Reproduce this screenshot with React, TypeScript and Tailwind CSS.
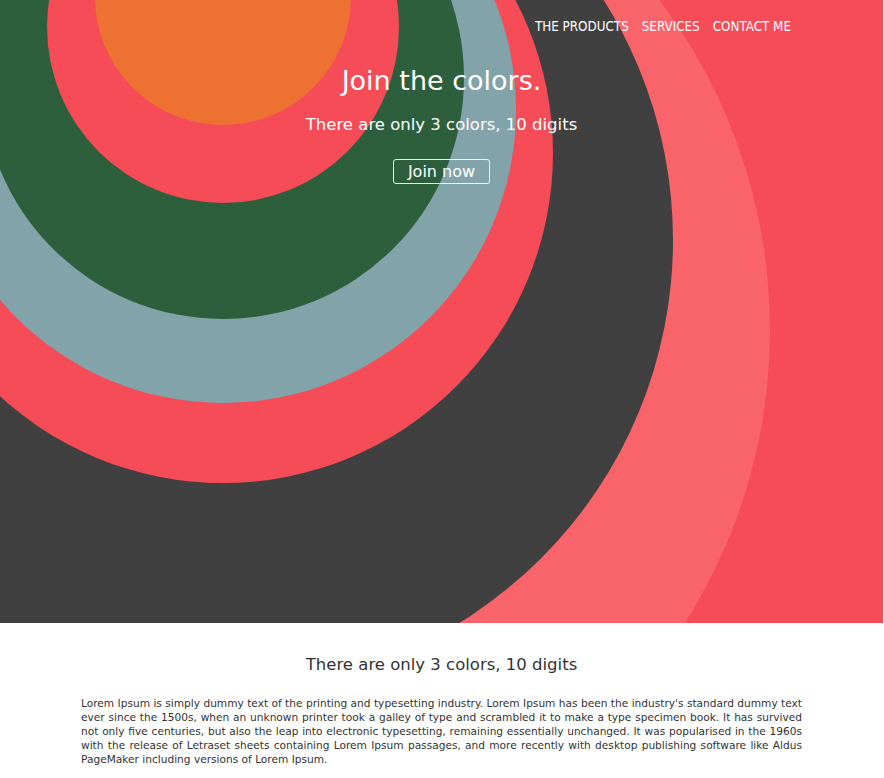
import React from "react";

const rings = [
  { cx: 223, cy: 330, r: 547, fill: "#F9646B" },
  { cx: 223, cy: 240, r: 450, fill: "#404040" },
  { cx: 223, cy: 153, r: 330, fill: "#F64C57" },
  { cx: 223, cy: 110, r: 293, fill: "#82A3AA" },
  { cx: 223, cy: 78, r: 241, fill: "#2E5F3D" },
  { cx: 223, cy: 27, r: 176, fill: "#F64C57" },
  { cx: 223, cy: -3, r: 128, fill: "#ED7231" },
];

function Backdrop() {
  return (
    <svg className="absolute inset-0 h-full w-full" viewBox="0 0 883 623" preserveAspectRatio="none">
      <rect width="883" height="623" fill="#F64C57" />
      {rings.map((c, i) => (
        <circle key={i} cx={c.cx} cy={c.cy} r={c.r} fill={c.fill} />
      ))}
    </svg>
  );
}

export default function App() {
  return (
    <div className="w-[883px] bg-white font-['DejaVu_Sans',sans-serif]">
      <header className="relative h-[623px] overflow-hidden text-white">
        <Backdrop />
        <nav className="relative flex justify-end gap-[13px] pr-[92px] pt-[19px] font-['DejaVu_Sans_Condensed','DejaVu_Sans',sans-serif] text-[13.3px] leading-4">
          <a href="#">THE PRODUCTS</a>
          <a href="#">SERVICES</a>
          <a href="#">CONTACT ME</a>
        </nav>
        <div className="relative mt-[30px] flex flex-col items-center">
          <h1 className="text-[27px] leading-8">Join the colors.</h1>
          <p className="mt-[16px] text-[16.5px] leading-6">There are only 3 colors, 10 digits</p>
          <button className="mt-[22px] rounded-[3px] border border-white/90 px-[14px] text-[16px] leading-[23px]">
            Join now
          </button>
        </div>
      </header>
      <section className="px-[81px] pb-4 pt-[30px] text-[#333]">
        <h2 className="text-center text-[16.5px] leading-6">There are only 3 colors, 10 digits</h2>
        <p className="mt-[19px] text-justify text-[10.6px] leading-[14px]">
          Lorem Ipsum is simply dummy text of the printing and typesetting industry. Lorem Ipsum has been the
          industry's standard dummy text ever since the 1500s, when an unknown printer took a galley of type and
          scrambled it to make a type specimen book. It has survived not only five centuries, but also the leap into
          electronic typesetting, remaining essentially unchanged. It was popularised in the 1960s with the release of
          Letraset sheets containing Lorem Ipsum passages, and more recently with desktop publishing software like
          Aldus PageMaker including versions of Lorem Ipsum.
        </p>
      </section>
    </div>
  );
}
